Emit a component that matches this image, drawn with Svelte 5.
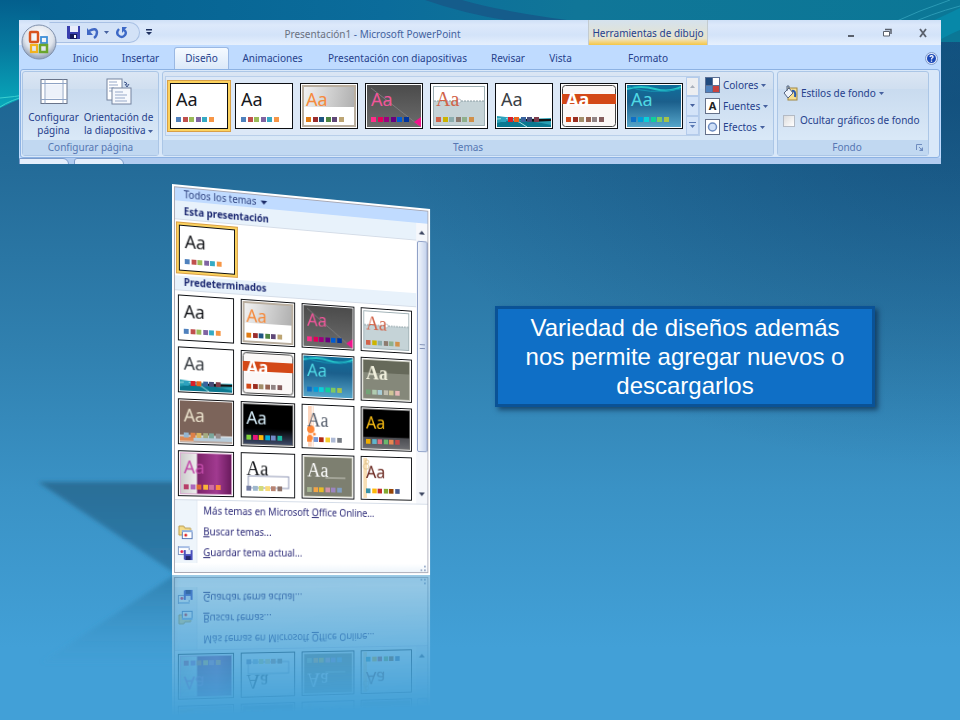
<script>
  const swatch = {
    office: ["#4f81bd", "#c0504d", "#9bbb59", "#8064a2", "#35aac4", "#f79646"],
    brown: ["#e07b12", "#9b2d2d", "#1f5583", "#4e8542", "#604878", "#bda573"],
    pink: ["#ff2d8a", "#e40059", "#9c007f", "#68007f", "#005bd3", "#00349e"],
    coast: ["#d16349", "#ccb400", "#8cadae", "#8c7b70", "#8fb08c", "#d19049"],
    wave: ["#2da2bf", "#da1f28", "#eb641b", "#39639d", "#474b78", "#7d3c4a"],
    fair: ["#d34817", "#9b2d1f", "#a28e6a", "#956251", "#918485", "#855d5d"],
    flow: ["#0f6fc6", "#009dd9", "#0bd0d9", "#10cf9b", "#7cca62", "#a5c249"],
    foundry: ["#72a376", "#b0ccb0", "#a8cdd7", "#c0beaf", "#cec597", "#e8b7b7"],
    median: ["#94b6d2", "#dd8047", "#d8b25c", "#a5ab81", "#7ba79d", "#968c8c"],
    metro: ["#7fd13b", "#ea157a", "#feb80a", "#00addc", "#738ac8", "#1ab39f"],
    mirror: ["#fe8637", "#7598d9", "#b32c16", "#f5cd2d", "#aebad5", "#777c84"],
    module: ["#f0ad00", "#60b5cc", "#e66c7d", "#6bb76d", "#e88651", "#c64847"],
    opulent: ["#b83d68", "#ac66bb", "#de6c36", "#f9b639", "#cf6da4", "#fa8d3d"],
    origin: ["#727ca3", "#9fb8cd", "#d2da7a", "#fada7a", "#b88472", "#8e736a"],
    paper: ["#a5b592", "#f3a447", "#e7bc29", "#d092a7", "#9c85c0", "#809ec2"],
    solstice: ["#3891a7", "#feb80a", "#c32d2e", "#84aa33", "#964305", "#475a8d"],
  };

  const ribbonThemes = ["office", "office", "brown", "pink", "coast", "wave", "fair", "flow"];
  const menuThemes = [
    "office", "brown", "pink", "coast",
    "wave", "fair", "flow", "foundry",
    "median", "metro", "mirror", "module",
    "opulent", "origin", "paper", "solstice",
  ];

  const tabs = [
    "Inicio",
    "Insertar",
    "Diseño",
    "Animaciones",
    "Presentación con diapositivas",
    "Revisar",
    "Vista",
    "Formato",
  ];

  let activeTab = $state("Diseño");
  let hideGraphics = $state(false);
</script>

{#snippet art(name)}
  <svg class="art" viewBox="0 0 54 42" preserveAspectRatio="none" aria-hidden="true">
    {#if name === "brown"}
      <rect x="1" y="1" width="52" height="40" fill="none" stroke="#b9ae9f" stroke-width="2" />
      <rect x="2" y="22" width="50" height="18" fill="#fff" />
    {:else if name === "pink"}
      <path d="M4 3 L54 42" stroke="#8b8b8b" stroke-width="0.7" />
      <path d="M54 32 L47 37 L54 42 Z" fill="#f0148c" />
    {:else if name === "coast"}
      <rect x="1.5" y="1.5" width="51" height="39" fill="#fff" stroke="#9fb0b5" />
      <rect x="2" y="16" width="50" height="24" fill="#c5d3d7" />
      <path d="M2 16 H52" stroke="#8b9da3" stroke-dasharray="2 1" />
      <circle cx="27" cy="16" r="2" fill="#fff" stroke="#9fb0b5" stroke-width="0.7" />
    {:else if name === "wave"}
      <path d="M0 31 L28 34 L54 33 V42 H0 Z" fill="#28a0b4" />
      <path d="M22 34 H54 V36 L32 37 Z" fill="#111" />
      <path d="M0 38 Q20 32 54 40 V42 H0 Z" fill="#0b7890" />
      <path d="M0 34 Q16 31 30 42" stroke="#a5e0e4" fill="none" />
    {:else if name === "fair"}
      <rect x="0.5" y="0.5" width="53" height="41" rx="3" fill="#fbf8f7" stroke="#444" />
      <rect x="0" y="9" width="54" height="10" fill="#d34817" />
    {:else if name === "flow"}
      <path d="M0 4 Q14 0 28 4 T54 2" stroke="#25c5c9" stroke-width="2" fill="none" />
      <path d="M0 1 Q20 10 54 4" stroke="#1796b5" fill="none" />
    {:else if name === "foundry"}
      <rect x="1" y="1" width="52" height="13" fill="#66695a" />
      <rect x="0.5" y="0.5" width="53" height="41" fill="none" stroke="#c9cabe" />
    {:else if name === "median"}
      <rect x="0" y="35" width="54" height="5" fill="#b7cbd9" />
      <rect x="0" y="36" width="14" height="5" fill="#dd8a55" />
      <path d="M0 35 H54 M0 41 H54" stroke="#eee" />
    {:else if name === "metro" || name === "module"}
      <rect x="0.5" y="0.5" width="53" height="41" fill="none" stroke="#777" />
    {:else if name === "mirror"}
      <rect x="5" y="0" width="4" height="42" fill="#fdd5bd" />
      <rect x="10" y="0" width="1" height="42" fill="#fdd5bd" />
      <circle cx="8" cy="24" r="4" fill="#fe8637" />
      <circle cx="7" cy="33" r="3" fill="#fe8637" />
      <circle cx="12" cy="29" r="1.5" fill="#fe8637" />
    {:else if name === "opulent"}
      <rect x="0.5" y="0.5" width="53" height="41" fill="none" stroke="#d9a9cf" />
    {:else if name === "origin"}
      <rect x="6" y="22" width="43" height="12" fill="#fff" stroke="#8d95b4" />
    {:else if name === "paper"}
      <rect x="0.5" y="0.5" width="53" height="41" fill="none" stroke="#d7d8cc" />
      <path d="M24 22 H46" stroke="#c9cabf" />
    {:else if name === "solstice"}
      <rect x="1" y="0" width="4" height="42" fill="#f8dfb5" />
      <circle cx="4" cy="9" r="3" fill="none" stroke="#dfc48d" />
      <circle cx="5" cy="4" r="2" fill="none" stroke="#dfc48d" />
    {/if}
  </svg>
{/snippet}

{#snippet thumb(name, selected)}
  <button class="thumb" class:selected aria-label="Tema {name}">
    <span class="face {name}">
      {@render art(name)}
      <span class="aa">Aa</span>
      <span class="swatches">
        {#each swatch[name] as color}
          <i style="background: {color}"></i>
        {/each}
      </span>
    </span>
  </button>
{/snippet}

{#snippet caret()}
  <svg class="caret" viewBox="0 0 5 3" aria-hidden="true"><path d="M0 0 H5 L2.5 3 Z" fill="currentColor" /></svg>
{/snippet}

<main>
  <svg class="backdrop" viewBox="0 0 960 720" preserveAspectRatio="none" aria-hidden="true">
    <defs>
      <linearGradient id="teal" x1="0" y1="0" x2="0" y2="1">
        <stop offset="0" stop-color="#035f8d" />
        <stop offset="0.45" stop-color="#067a9f" />
        <stop offset="1" stop-color="#08a9bb" />
      </linearGradient>
      <linearGradient id="top" x1="0" y1="0" x2="1" y2="0">
        <stop offset="0" stop-color="#04608f" />
        <stop offset="0.4" stop-color="#0b6c9b" />
        <stop offset="0.6" stop-color="#107698" />
        <stop offset="1" stop-color="#0b7796" />
      </linearGradient>
      <linearGradient id="shade" x1="0" y1="0" x2="0" y2="1">
        <stop offset="0" stop-color="#2c6e97" />
        <stop offset="1" stop-color="#2d7cab" />
      </linearGradient>
      <linearGradient id="shade-low" x1="0" y1="0" x2="0" y2="1">
        <stop offset="0" stop-color="#2f81b0" />
        <stop offset="1" stop-color="#419bd0" stop-opacity="0.2" />
      </linearGradient>
      <filter id="soft"><feGaussianBlur stdDeviation="2" /></filter>
    </defs>
    <rect width="960" height="42" fill="url(#top)" />
    <path d="M425 0 Q470 16 530 24 L600 24 Q510 14 462 0 Z" fill="#155c8b" />
    <path d="M0 0 H40 V92 Q20 98 0 108 Z" fill="url(#teal)" />
    <path d="M0 98 Q14 97 30 94 M0 107 Q10 100 30 95" stroke="#3ccfd0" fill="none" />
    <path d="M900 36 Q935 20 960 8 V30 Q945 36 930 46 Z" fill="#0788a8" />
    <path d="M890 24 Q920 10 950 0 M905 26 Q930 14 960 6" stroke="#2b9ab5" fill="none" />
    <path d="M38 482 H176 V574 Z" fill="url(#shade)" filter="url(#soft)" />
    <path d="M176 574 V662 H42 Z" fill="url(#shade-low)" filter="url(#soft)" />
  </svg>

  <section class="ribbon">
    <button class="orb" aria-label="Botón de Office">
      <svg viewBox="0 0 36 38">
        <defs>
          <radialGradient id="orb" cx="0.5" cy="0.35" r="0.6">
            <stop offset="0" stop-color="#fff" />
            <stop offset="0.7" stop-color="#dfe4ec" />
            <stop offset="1" stop-color="#9daabf" />
          </radialGradient>
        </defs>
        <circle cx="18" cy="19" r="17" fill="url(#orb)" stroke="#7f90ac" />
        <rect x="9" y="9" width="8" height="10" rx="1" fill="none" stroke="#d9541e" stroke-width="2.5" />
        <rect x="20" y="14" width="6" height="6" fill="none" stroke="#3e8fd8" stroke-width="1.8" />
        <rect x="10" y="22" width="6" height="7" fill="none" stroke="#f2b21d" stroke-width="2.2" />
        <rect x="19" y="22" width="7" height="7" fill="none" stroke="#6aa52c" stroke-width="2.5" />
      </svg>
    </button>

    <header class="titlebar">
      <div class="title-left">
        <div class="quick">
          <button aria-label="Guardar">
            <svg width="13" height="13" viewBox="0 0 13 13">
              <path d="M0 0 H13 V13 H1 L0 12 Z" fill="#3a3fae" />
              <rect x="3" y="0" width="8" height="6" fill="#e9ecfb" />
              <rect x="3" y="8" width="7" height="5" fill="#171a5c" />
              <rect x="7" y="9" width="2" height="3" fill="#fff" />
            </svg>
          </button>
          <button class="undo" aria-label="Deshacer">
            <svg width="12" height="12" viewBox="0 0 12 12">
              <path d="M2 4 Q9 0 10 5 Q10 9 7 11" fill="none" stroke="#4068c4" stroke-width="2.4" />
              <path d="M0 1 V8 H6 Z" fill="#4068c4" />
            </svg>
            {@render caret()}
          </button>
          <button aria-label="Repetir">
            <svg width="12" height="12" viewBox="0 0 12 12">
              <path d="M3 2 Q0 5 2 8 Q6 12 9 8 Q11 5 8 3" fill="none" stroke="#3c68c6" stroke-width="2.4" />
              <path d="M6 0 H11 L6 6 Z" fill="#3c68c6" />
            </svg>
          </button>
        </div>
        <button class="customize" aria-label="Personalizar">
          <svg width="6" height="7" viewBox="0 0 6 7"><path d="M0 0 H6 V1.5 H0 Z M0 3 H6 L3 6 Z" fill="#1d2f5e" /></svg>
        </button>
        <h1><span>Presentación1</span> - Microsoft PowerPoint</h1>
      </div>
      <div class="context">Herramientas de dibujo</div>
      <div class="window">
        <button aria-label="Minimizar">
          <svg width="10" height="10" viewBox="0 0 10 10"><path d="M2 8 H8" stroke="#59606c" stroke-width="2" /></svg>
        </button>
        <button aria-label="Restaurar">
          <svg width="10" height="10" viewBox="0 0 10 10">
            <path d="M3 1.5 H9 V6" fill="none" stroke="#59606c" stroke-width="1.5" />
            <path d="M1.5 3.5 H7.5 V8 H1.5 Z" fill="#fff" stroke="#59606c" />
          </svg>
        </button>
        <button aria-label="Cerrar">
          <svg width="10" height="10" viewBox="0 0 10 10"><path d="M2 1 L8 9 M8 1 L2 9" stroke="#59606c" stroke-width="1.8" /></svg>
        </button>
      </div>
    </header>

    <nav class="tabs">
      {#each tabs as tab}
        <button class:active={tab === activeTab} onclick={() => (activeTab = tab)}>{tab}</button>
      {/each}
      <button class="help" aria-label="Ayuda">
        <svg width="13" height="13" viewBox="0 0 13 13">
          <circle cx="6.5" cy="6.5" r="6" fill="#dfe9fa" stroke="#7f9bcb" />
          <circle cx="6.5" cy="6.5" r="4.5" fill="#1c49b8" />
          <path d="M5 5 Q5 3.6 6.6 3.6 Q8.2 3.8 8 5.2 Q6.5 6 6.5 7.4 M6.5 8.4 V9.8" fill="none" stroke="#fff" stroke-width="1.3" />
        </svg>
      </button>
    </nav>

    <div class="groups">
      <section class="group setup">
        <div class="content">
          <button class="big">
            <svg width="28" height="26" viewBox="0 0 28 26">
              <rect x="1" y="1" width="26" height="24" fill="#fff" stroke="#69748a" />
              <path d="M5 1 V25 M23 1 V25 M1 5 H27 M1 21 H27" stroke="#8ea3c4" />
              <rect x="6" y="6" width="16" height="14" fill="#edf2fa" />
            </svg>
            <span>Configurar<br />página</span>
          </button>
          <button class="big wide">
            <svg width="26" height="27" viewBox="0 0 26 27">
              <rect x="1" y="1" width="15" height="21" fill="#fff" stroke="#7484a0" />
              <path d="M3 4 H11 M3 7 H12 M3 10 H8 M3 13 H6" stroke="#97a9c9" />
              <rect x="6" y="10" width="19" height="16" fill="#f5f8fd" stroke="#7484a0" />
              <path d="M9 14 H17 M9 17 H21 M9 20 H19 M9 23 H21" stroke="#97a9c9" />
              <path d="M18 4 Q21 4 21 7 M19 6 L21 9 L23 6" fill="none" stroke="#3b5288" />
            </svg>
            <span>Orientación de<br />la diapositiva {@render caret()}</span>
          </button>
        </div>
        <h2>Configurar página</h2>
      </section>

      <section class="group themes">
        <div class="content">
          <div class="gallery">
            <div class="strip">
              {#each ribbonThemes as name, i}
                {@render thumb(name, i === 0)}
              {/each}
            </div>
            <div class="scroller">
              <button class="off" aria-label="Fila anterior">
                <svg class="caret" viewBox="0 0 5 3"><path d="M0 3 H5 L2.5 0 Z" fill="#a9b0bb" /></svg>
              </button>
              <button aria-label="Fila siguiente">{@render caret()}</button>
              <button class="more" aria-label="Más">
                <svg width="7" height="6" viewBox="0 0 7 6"><path d="M0 0 H7 V1 H0 Z M1 3 H6 L3.5 6 Z" fill="#5878b4" /></svg>
              </button>
            </div>
          </div>
          <div class="options">
            <button>
              <svg width="15" height="16" viewBox="0 0 15 16">
                <rect width="15" height="16" fill="#5b6f94" />
                <rect x="1" y="1" width="6" height="7" fill="#1f497d" />
                <rect x="8" y="1" width="6" height="7" fill="#fff" />
                <rect x="1" y="9" width="6" height="6" fill="#4f81bd" />
                <rect x="8" y="9" width="6" height="6" fill="#c9433f" />
              </svg>
              Colores {@render caret()}
            </button>
            <button>
              <span class="letter">A</span>
              Fuentes {@render caret()}
            </button>
            <button>
              <svg width="15" height="16" viewBox="0 0 15 16">
                <rect x="0.5" y="0.5" width="14" height="15" fill="#fff" stroke="#65718a" />
                <circle cx="7.5" cy="8" r="4" fill="#cfe0f8" stroke="#6d8cc2" stroke-width="1.5" />
              </svg>
              Efectos {@render caret()}
            </button>
          </div>
        </div>
        <h2>Temas</h2>
      </section>

      <section class="group background">
        <div class="content">
          <button class="styles">
            <svg width="15" height="16" viewBox="0 0 15 16">
              <rect x="5" y="3" width="9" height="12" fill="#f6df8e" stroke="#a08643" />
              <path d="M9 6 Q13 5 12 12" fill="none" stroke="#2b5cae" stroke-width="2" />
              <path d="M1 8 L6 3 L10 8 L5 13 Z" fill="#eef3fb" stroke="#55647f" />
              <path d="M4 6 V1 H6 V4" fill="none" stroke="#55647f" />
            </svg>
            Estilos de fondo {@render caret()}
          </button>
          <label><input type="checkbox" bind:checked={hideGraphics} /> Ocultar gráficos de fondo</label>
        </div>
        <h2>
          <span>Fondo</span>
          <button aria-label="Formato del fondo">
            <svg width="8" height="8" viewBox="0 0 8 8">
              <path d="M0.5 6 V0.5 H6 M3 3 L6 6" fill="none" stroke="#6f8cbf" />
              <path d="M7 3 V7 H3 Z" fill="#6f8cbf" />
            </svg>
          </button>
        </h2>
      </section>
    </div>

    <div class="below">
      <span></span>
      <span></span>
    </div>
  </section>

  <div class="slide">
    <aside class="menu">
      <div class="frame">
        <button class="filter">Todos los temas <svg width="7" height="4" viewBox="0 0 7 4"><path d="M0 0 H7 L3.5 4 Z" fill="#1a2a66" /></svg></button>
        <div class="body">
          <div class="lists">
            <h3 class="first">Esta presentación</h3>
            <div class="current">{@render thumb("office", true)}</div>
            <h3>Predeterminados</h3>
            <div class="grid">
              {#each menuThemes as name}
                {@render thumb(name, false)}
              {/each}
            </div>
          </div>
          <div class="scrollbar">
            <svg width="7" height="4" viewBox="0 0 7 4"><path d="M0 4 H7 L3.5 0 Z" fill="#3c4560" /></svg>
            <div class="handle"><i></i></div>
            <svg width="7" height="4" viewBox="0 0 7 4"><path d="M0 0 H7 L3.5 4 Z" fill="#3c4560" /></svg>
          </div>
        </div>
        <div class="actions">
          <button><span class="icon"></span>Más temas en Microsoft <u>O</u>ffice Online...</button>
          <button>
            <span class="icon">
              <svg width="15" height="15" viewBox="0 0 15 15">
                <path d="M1 2 H6 L7 4 H13 V11 H1 Z" fill="#f5dd8b" stroke="#b99a4b" />
                <rect x="4.5" y="6.5" width="10" height="8" fill="#fff" stroke="#5677b5" />
                <rect x="4" y="6" width="11" height="2" fill="#8fb0e2" />
                <circle cx="8" cy="11" r="1.5" fill="#e02020" />
              </svg>
            </span><u>B</u>uscar temas...
          </button>
          <button>
            <span class="icon">
              <svg width="15" height="15" viewBox="0 0 15 15">
                <rect x="0.5" y="1.5" width="11" height="8" fill="#fff" stroke="#7f96c0" />
                <rect x="1" y="1" width="11" height="2" fill="#a9c0e6" />
                <circle cx="4" cy="6.5" r="1.5" fill="#e02050" />
                <path d="M6 5 H15 V15 H7 L6 14 Z" fill="#4a50bd" />
                <rect x="8" y="5" width="5" height="4" fill="#e6e9fb" />
                <rect x="8" y="11" width="5" height="4" fill="#24286e" />
              </svg>
            </span><u>G</u>uardar tema actual...
          </button>
        </div>
        <div class="grip">
          <svg width="6" height="6" viewBox="0 0 6 6"><path d="M4 0 H6 V2 H4 Z M4 4 H6 V6 H4 Z M0 4 H2 V6 H0 Z" fill="#9fb0cc" /></svg>
        </div>
      </div>
    </aside>

    <p class="note">Variedad de diseños además nos permite agregar nuevos o descargarlos</p>
  </div>
</main>

<style>
  :global(body) {
    margin: 0;
  }

  main {
    position: relative;
    box-sizing: border-box;
    min-height: 100vh;
    padding: 20px 19px 0;
    overflow: hidden;
    font-family: "Noto Sans", "Open Sans", sans-serif;
    font-size: 10px;
    line-height: 13px;
    color: #26418c;
    background:
      radial-gradient(ellipse at 100% 14%, rgba(3, 50, 95, 0.4), transparent 42%),
      linear-gradient(#165f8d 0%, #246c99 24%, #3080af 48%, #3a92c5 68%, #42a0d7 90%);
  }

  button {
    padding: 0;
    border: 0;
    background: none;
    font: inherit;
    color: inherit;
  }

  svg {
    flex: none;
  }

  h1,
  h2,
  h3,
  p {
    margin: 0;
    font: inherit;
  }

  .backdrop {
    position: absolute;
    inset: 0;
    width: 100%;
    height: 100%;
  }

  .caret {
    width: 5px;
    height: 3px;
    vertical-align: middle;
    color: #46619f;
  }

  /* ribbon */

  .ribbon {
    position: relative;
    background: #bfdbff;
  }

  .orb {
    position: absolute;
    left: 2px;
    top: 3px;
  }

  .orb svg {
    display: block;
    width: 36px;
    height: 38px;
  }

  .titlebar {
    display: grid;
    grid-template-columns: 569px 120px 1fr;
    height: 25px;
    background: linear-gradient(#cfe0f7, #dde9fb 20%, #d3e3f9 60%, #e6f0fd);
  }

  .title-left {
    display: flex;
    align-items: center;
    padding-left: 30px;
  }

  .quick {
    display: flex;
    align-items: center;
    gap: 7px;
    box-sizing: border-box;
    width: 91px;
    height: 21px;
    padding-left: 17px;
    border: 1px solid #a8c0e4;
    border-left-color: transparent;
    border-radius: 0 11px 11px 0;
    background: #d3e2f7;
  }

  .quick button,
  .scroller button,
  .window button {
    display: flex;
    align-items: center;
    justify-content: center;
  }

  .undo {
    gap: 5px;
  }

  .customize {
    width: 17px;
  }

  h1 {
    flex: 1;
    padding-top: 3px;
    text-align: center;
    color: #44639f;
  }

  h1 span {
    color: #6a7180;
  }

  .context {
    padding-top: 7px;
    box-sizing: border-box;
    border: solid #c3cbd0;
    border-width: 0 1px;
    text-align: center;
    background: linear-gradient(#d5e2ee, #e6e3cd 75%, #f3d995 84%, #f5c644);
  }

  .window {
    display: flex;
    justify-content: flex-end;
  }

  .window button {
    width: 36px;
  }

  .tabs {
    display: grid;
    grid-template-columns: 51px 59px 63px 79px 171px 50px 55px 120px 1fr;
    height: 24px;
    padding-left: 41px;
    background: #bfdbff;
  }

  .tabs button {
    padding-top: 2px;
    white-space: nowrap;
  }

  .tabs .active {
    margin: 2px 4px 0;
    padding: 0;
    border: 1px solid #9ab8e3;
    border-bottom: 0;
    border-radius: 3px 3px 0 0;
    background: linear-gradient(#f5faff, #dce9f9);
  }

  .tabs .help {
    justify-self: end;
    padding-right: 3px;
  }

  .help svg {
    display: block;
  }

  .groups {
    display: flex;
    gap: 3px;
    margin: 0 1px;
    padding: 1px 10px 1px 1px;
    border: 1px solid #8db2e3;
    border-radius: 3px;
    background: #d9e8f9;
  }

  .group {
    display: flex;
    flex-direction: column;
    box-sizing: border-box;
    height: 85px;
    border: 1px solid #abc6e6;
    border-radius: 3px;
    background: linear-gradient(#dbe6f4, #d0dff0 20%, #c9dbef 21%, #d9e8f7 80%);
  }

  .content {
    display: flex;
    flex: 1;
  }

  h2 {
    height: 15px;
    line-height: 15px;
    text-align: center;
    color: #5677b3;
    background: #c1d8f1;
  }

  .setup {
    width: 137px;
  }

  .big {
    display: flex;
    flex-direction: column;
    align-items: center;
    gap: 6px;
    width: 61px;
    padding-top: 6px;
    white-space: nowrap;
  }

  .big svg:not(.caret) {
    height: 27px;
  }

  .big.wide {
    width: 69px;
  }

  .themes {
    flex: 1;
  }

  .themes .content {
    align-items: center;
    gap: 5px;
    padding-left: 2px;
  }

  .gallery {
    display: flex;
    flex: 1;
    height: 58px;
    border: 1px solid #b9cfea;
    background: #dce8f7;
  }

  .strip {
    display: flex;
    flex: 1;
    align-items: center;
    gap: 7px;
    padding-left: 4px;
  }

  .scroller {
    display: grid;
    grid-template-rows: 1fr 1fr 1fr;
    width: 13px;
  }

  .scroller button {
    border: 1px solid #b4cbeb;
    background: #d3e3f8;
  }

  .scroller .off {
    background: #eceef1;
  }

  .options {
    display: grid;
    grid-template-rows: 21px 21px 21px;
    align-items: center;
    width: 68px;
  }

  .options button,
  .styles {
    display: flex;
    align-items: center;
    gap: 3px;
    white-space: nowrap;
  }

  .letter {
    box-sizing: border-box;
    width: 15px;
    height: 16px;
    border: 1px solid #65718a;
    background: #fff;
    line-height: 14px;
    font-size: 11px;
    font-weight: bold;
    color: #222;
  }

  .background {
    width: 152px;
  }

  .background .content {
    flex-direction: column;
    justify-content: center;
    gap: 13px;
    padding-left: 5px;
  }

  label {
    display: flex;
    align-items: center;
    gap: 5px;
    white-space: nowrap;
  }

  input {
    appearance: none;
    box-sizing: border-box;
    width: 12px;
    height: 12px;
    margin: 0;
    border: 1px solid #b3bac4;
    background: linear-gradient(135deg, #dcdcdc, #fff);
  }

  .background h2 {
    display: flex;
    align-items: center;
    padding-right: 4px;
  }

  .background h2 span {
    flex: 1;
  }

  .background h2 button {
    display: flex;
  }

  .below {
    display: flex;
    gap: 5px;
    height: 6px;
    overflow: hidden;
    background: #b2ccf0;
  }

  .below span {
    width: 50px;
    height: 10px;
    box-sizing: border-box;
    border: 1px solid #7c9ccc;
    border-radius: 0 6px 0 0;
    background: #e4eefb;
  }

  .below span + span {
    border-radius: 3px 6px 0 0;
  }

  /* theme thumbnails */

  .thumb {
    box-sizing: border-box;
    width: 58px;
    height: 46px;
    padding: 1px;
    border: 1px solid #0c0e12;
    background: #fff;
    text-align: left;
  }

  .thumb.selected {
    box-shadow: 0 0 0 2px #fbd25f, 0 0 0 3px #d9a046;
  }

  .face {
    position: relative;
    display: flex;
    flex-direction: column;
    justify-content: space-between;
    box-sizing: border-box;
    height: 42px;
    padding: 1px 12px 5px 4px;
  }

  .art {
    position: absolute;
    inset: 0;
    width: 100%;
    height: 100%;
  }

  .aa,
  .swatches {
    position: relative;
  }

  .aa {
    font-size: 18px;
    line-height: 26px;
    color: #16181c;
  }

  .swatches {
    display: flex;
    justify-content: space-between;
  }

  .swatches i {
    width: 5px;
    height: 5px;
  }

  .brown { background: linear-gradient(100deg, #f4f4f4, #a9a9a9); }
  .brown .aa { color: #f58a3c; }
  .pink { background: linear-gradient(#4b4b4b, #6c6c6c); }
  .pink .aa { color: #f0569a; }
  .coast .aa { color: #d16349; font-family: "Liberation Serif", serif; font-size: 20px; }
  .wave .aa { color: #3a3f45; }
  .fair .aa { color: #fff; font-weight: bold; }
  .flow { background: linear-gradient(#0f6f9c, #1b5f8c 40%, #55a5c9); }
  .flow .aa { color: #4fd8e4; }
  .foundry { background: #85887a; }
  .foundry .aa { color: #f0efdc; font-family: "Liberation Serif", serif; font-size: 20px; font-weight: bold; }
  .median { background: #7c645a; }
  .median .aa { color: #e8dfc9; }
  .metro { background: linear-gradient(#000 60%, #3f4d6d); }
  .metro .aa { color: #d5ecf8; }
  .mirror .aa { color: #575f6d; font-family: "Liberation Serif", serif; font-size: 20px; }
  .module { background: linear-gradient(#000 70%, #4a4b50 71%, #6c6d72); }
  .module .aa { color: #f6bb13; }
  .opulent { background: linear-gradient(90deg, #c9c9c9, #eee 32%, #7b2268 33%, #a13a90 70%, #66185a); }
  .opulent .aa { color: #c04aa8; }
  .origin .aa { font-family: "Liberation Serif", serif; font-size: 20px; }
  .paper { background: #7d7f70; }
  .paper .aa { color: #fff; font-family: "Liberation Serif", serif; font-size: 20px; }
  .solstice .aa { color: #6c2a22; }

  /* slide content */

  .slide {
    position: relative;
    display: flex;
    align-items: flex-start;
    gap: 43px;
    padding: 20px 0 0 153px;
  }

  .menu {
    box-sizing: border-box;
    flex: none;
    width: 280px;
    padding: 2px;
    background: #fff;
    color: #2c2a78;
    transform: perspective(710px) rotateY(10deg);
    transform-origin: left bottom;
    -webkit-box-reflect: below 0 linear-gradient(transparent 64%, rgba(0, 0, 0, 0.48));
  }

  .frame {
    border: 1px solid #a9a9b5;
  }

  .filter {
    display: flex;
    align-items: center;
    gap: 4px;
    width: 100%;
    height: 13px;
    padding-left: 9px;
    color: #2b3f7d;
    background: #c0dbff;
  }

  .body {
    display: flex;
  }

  .lists {
    flex: 1;
  }

  h3 {
    height: 15px;
    padding-left: 9px;
    border-bottom: 1px solid #d5dde8;
    box-sizing: border-box;
    font-weight: bold;
    color: #1d2a72;
    background: #e8f2fb;
  }

  .first {
    height: 19px;
    padding-top: 4px;
  }

  .current {
    padding: 5px 4px;
    height: 46px;
  }

  .grid {
    display: grid;
    grid-template-columns: repeat(4, 58px);
    gap: 6px 7px;
    padding: 4px 3px 3px;
  }

  .scrollbar {
    display: flex;
    flex-direction: column;
    align-items: center;
    gap: 7px;
    width: 13px;
    padding: 8px 0;
    background: #f5f7fb;
  }

  .handle {
    display: flex;
    align-items: center;
    justify-content: center;
    width: 10px;
    height: 223px;
    margin-bottom: auto;
    border: 1px solid #8d9fc6;
    border-radius: 2px;
    background: linear-gradient(90deg, #f1f5fc, #c5d3ec);
  }

  .handle i {
    width: 6px;
    height: 3px;
    border: solid #7d8db3;
    border-width: 1px 0;
  }

  .actions {
    border-top: 1px solid #d5dde8;
    background: linear-gradient(90deg, #eef5fb 22px, #c9d8e8 22px, #fff 23px);
  }

  .actions button {
    display: flex;
    align-items: center;
    width: 100%;
    height: 21px;
    white-space: pre;
  }

  .icon {
    display: flex;
    width: 26px;
    padding-left: 3px;
  }

  .grip {
    display: flex;
    align-items: center;
    justify-content: flex-end;
    height: 9px;
    padding-right: 2px;
    background: linear-gradient(#fff, #eef5fb);
  }

  .note {
    box-sizing: border-box;
    width: 380px;
    margin-top: 122px;
    padding: 4px 20px;
    border: 3px solid #0a5296;
    background: #0f6fc6;
    box-shadow: 3px 3px 5px rgba(0, 20, 50, 0.55);
    font: 24px/29px "Liberation Sans", Arial, sans-serif;
    text-align: center;
    color: #fff;
  }
</style>
